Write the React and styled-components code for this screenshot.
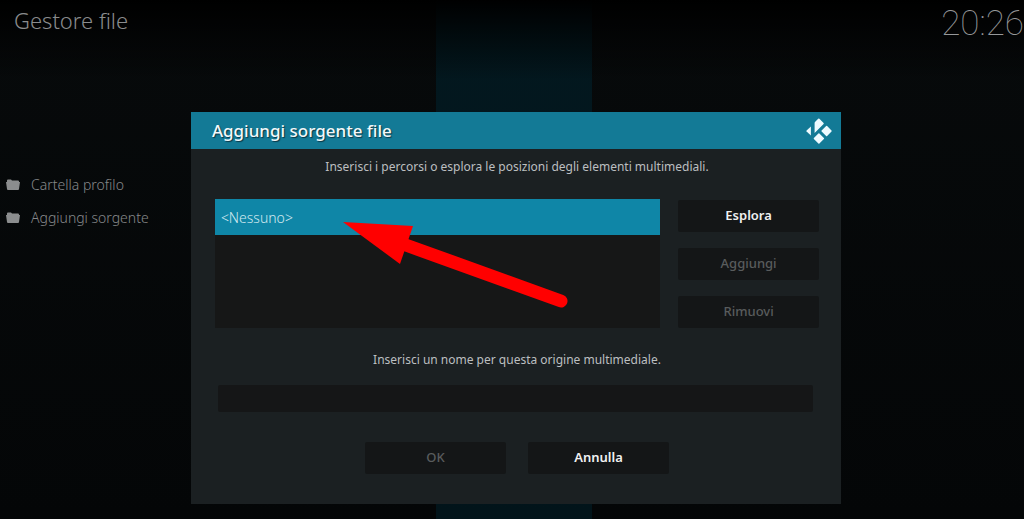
import React from "react";
import styled, { createGlobalStyle } from "styled-components";

const GlobalStyle = createGlobalStyle`
  * {
    box-sizing: border-box;
  }
  body {
    margin: 0;
    background: #050809;
    font-family: "Noto Sans", "Open Sans", sans-serif;
    overflow: hidden;
  }
`;
const Screen = styled.main`
  position: relative;
  min-height: 100vh;
  color: #86888a;
  background:
    linear-gradient(#000, transparent 80px),
    linear-gradient(#03181f, #02141a) 50.2% 0 / 156px 100% no-repeat,
    linear-gradient(#070a0b, #040607);
`;
const TopBar = styled.header`
  display: flex;
  justify-content: space-between;
  align-items: flex-start;
  height: 44px;
  padding-left: 14px;
`;
const PageTitle = styled.h1`
  margin: 0;
  font-size: 22px;
  line-height: 40px;
  font-weight: 300;
  color: #8a8c8d;
`;
const Clock = styled.time`
  font-family: Roboto, sans-serif;
  font-size: 35px;
  line-height: 48px;
  font-weight: 100;
  color: #96989a;
`;
const FileList = styled.ul`
  list-style: none;
  margin: 0;
  padding: 124px 0 0 6px;
`;
const FileItem = styled.li`
  display: flex;
  align-items: center;
  gap: 11px;
  height: 33px;
  font-size: 14px;
  font-weight: 300;
  color: #86888a;
`;
const Overlay = styled.div`
  position: absolute;
  inset: 0;
  display: flex;
  justify-content: center;
  align-items: flex-start;
  padding: 112px 0 0 8px;
`;
const Dialog = styled.section`
  position: relative;
  width: 64%;
  background: #1b2022;
`;
const DialogHeader = styled.header`
  display: flex;
  justify-content: space-between;
  align-items: center;
  height: 37px;
  padding: 0 9px 0 21px;
  background: #137a96;
`;
const DialogTitle = styled.h2`
  margin: 0;
  font-size: 17px;
  line-height: 24px;
  font-weight: 500;
  color: #f2f8fa;
  text-shadow: 1px 1px 1px #0a3644;
`;
const DialogForm = styled.form`
  padding: 6px 22px 30px 24px;
`;
const Hint = styled.p`
  margin: 0;
  font-size: 12px;
  line-height: 24px;
  text-align: center;
  color: #bcbfc0;
`;
const SourceArea = styled.div`
  display: flex;
  gap: 18px;
  margin: 20px 0;
`;
const PathList = styled.div`
  flex: 1;
  height: 129px;
  background: #161717;
`;
const PathRow = styled.button`
  display: block;
  width: 100%;
  height: 36px;
  padding: 0 6px;
  border: 0;
  background: #0f86a7;
  color: #d2e9ef;
  font: 300 14px "Noto Sans", sans-serif;
  text-align: left;
`;
const ButtonColumn = styled.div`
  display: flex;
  flex-direction: column;
  justify-content: space-between;
  padding-top: 1px;
`;
const Button = styled.button`
  width: 141px;
  height: 32px;
  padding: 0 0 2px;
  border: 0;
  border-radius: 2px;
  background: #141617;
  color: #f0f1f1;
  font: 600 13px "Noto Sans", sans-serif;
  &:disabled {
    color: #595c5d;
    font-weight: 500;
  }
`;
const NameLabel = styled.label`
  display: block;
  font-size: 12px;
  line-height: 24px;
  text-align: center;
  color: #bcbfc0;
`;
const NameInput = styled.input`
  display: block;
  width: calc(100% - 9px);
  height: 27px;
  margin: 13px 0 30px 3px;
  padding: 0 6px;
  border: 0;
  border-radius: 2px;
  background: #151617;
  color: #f0f1f1;
  font: 14px "Noto Sans", sans-serif;
`;
const Actions = styled.div`
  display: flex;
  justify-content: center;
  gap: 22px;
`;
const Arrow = styled.svg`
  position: absolute;
  left: 152px;
  top: 108px;
  pointer-events: none;
`;

const FolderIcon = () => (
  <svg width="14" height="12" viewBox="0 0 14 12" fill="#8b8d8e" aria-hidden="true">
    <path d="M1 3V1.500Q1 .5 2 .5H5L6 1.500H12Q13 1.500 13 2.500V3Z" />
    <path d="M0 3H14L13 10Q13 11 12 11H2Q1 11 1 10Z" />
  </svg>
);

const KodiLogo = () => (
  <svg width="26" height="26" viewBox="0 0 26 26" fill="#eefaff" aria-hidden="true">
    <path d="M12.200.8Q12.800.2 13.400.8L17.600 4.900Q18 5.400 17.600 5.900L8.600 15V5.200Q8.600 4.500 9 4Z" />
    <path d="M4.900 8.500V17.500L.6 13.500Q.2 13 .6 12.500Z" />
    <path d="M20.100 8Q20.600 7.500 21.100 8L25.500 12.500Q26 13 25.500 13.500L21.100 18Q20.600 18.500 20.100 18L15.600 13.500Q15.100 13 15.600 12.500Z" />
    <path d="M12.400 15.500Q12.900 15 13.400 15.500L17.900 20Q18.400 20.500 17.900 21L13.400 25.500Q12.900 26 12.400 25.500L7.900 21Q7.400 20.500 7.900 20Z" />
  </svg>
);

const files = ["Cartella profilo", "Aggiungi sorgente"];

const App = () => {
  return (
    <Screen>
      <GlobalStyle />
      <TopBar>
        <PageTitle>Gestore file</PageTitle>
        <Clock>20:26</Clock>
      </TopBar>
      <FileList>
        {files.map((file) => (
          <FileItem key={file}>
            <FolderIcon />
            {file}
          </FileItem>
        ))}
      </FileList>
      <Overlay>
        <Dialog role="dialog" aria-labelledby="dialog-title">
          <DialogHeader>
            <DialogTitle id="dialog-title">Aggiungi sorgente file</DialogTitle>
            <KodiLogo />
          </DialogHeader>
          <DialogForm onSubmit={(e) => e.preventDefault()}>
            <Hint>
              Inserisci i percorsi o esplora le posizioni degli elementi multimediali.
            </Hint>
            <SourceArea>
              <PathList>
                <PathRow type="button">&lt;Nessuno&gt;</PathRow>
              </PathList>
              <ButtonColumn>
                <Button type="button">Esplora</Button>
                <Button type="button" disabled>
                  Aggiungi
                </Button>
                <Button type="button" disabled>
                  Rimuovi
                </Button>
              </ButtonColumn>
            </SourceArea>
            <NameLabel htmlFor="source-name">
              Inserisci un nome per questa origine multimediale.
            </NameLabel>
            <NameInput id="source-name" type="text" />
            <Actions>
              <Button type="submit" disabled>
                OK
              </Button>
              <Button type="button">Annulla</Button>
            </Actions>
          </DialogForm>
          <Arrow width="228" height="90" viewBox="0 0 228 90" aria-hidden="true">
            <path d="M0 2 70 6 57 44Z" fill="#f00" />
            <path d="M60 24 218 81" stroke="#f00" strokeWidth="13" strokeLinecap="round" />
          </Arrow>
        </Dialog>
      </Overlay>
    </Screen>
  );
};

export default App;
